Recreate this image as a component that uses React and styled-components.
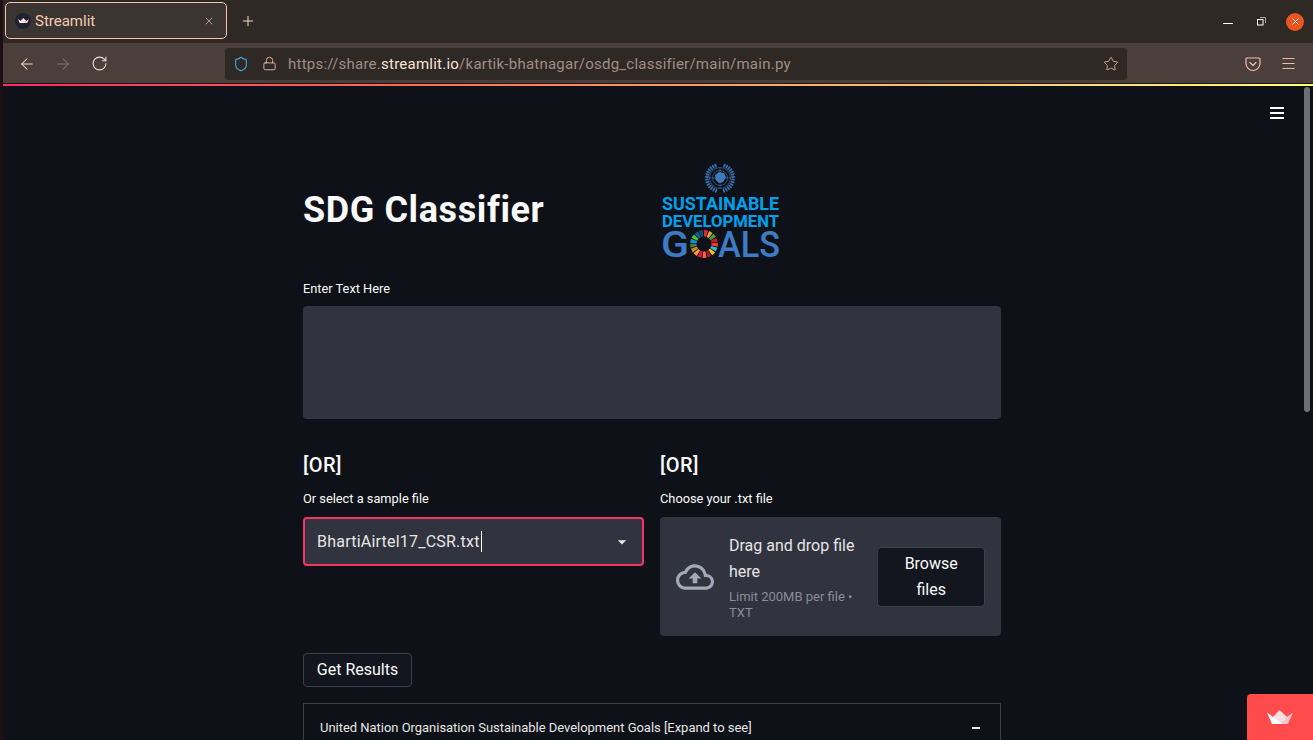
import React from "react";
import styled, { createGlobalStyle } from "styled-components";
import { ArrowLeft, ArrowRight, RotateCw, X, Plus, Lock, Star, Menu, Shield } from "lucide-react";
import { MdOutlineCloudUpload, MdArrowDropDown } from "react-icons/md";

const GlobalStyle = createGlobalStyle`
  html, body { margin: 0; padding: 0; background: #0e1117; overflow: hidden; }
  * { box-sizing: border-box; }
`;

const Screen = styled.div`
  display: flex;
  width: 1313px;
  height: 740px;
  overflow: hidden;
  position: relative;
  font-family: "Roboto", "Liberation Sans", sans-serif;
`;
const EdgeStrip = styled.div`
  width: 3px;
  background: #1d0f14;
`;
const Browser = styled.div`
  flex: 1;
  min-width: 0;
  display: flex;
  flex-direction: column;
`;

const TabBar = styled.div`
  height: 43px;
  background: #2f2926;
  display: flex;
  align-items: center;
  padding: 0 0 2px 2px;
`;
const Tab = styled.div`
  width: 222px;
  height: 37px;
  background: #3b3532;
  border: 1px solid #f3c3ad;
  border-radius: 5px;
  display: flex;
  align-items: center;
  padding: 0 11px 0 9px;
  color: #f7c9b3;
  font-size: 15px;
`;
const Favicon = styled.span`
  width: 16px;
  height: 16px;
  border-radius: 50%;
  background: #1f2230;
  display: flex;
  align-items: center;
  justify-content: center;
  margin-right: 4px;
`;
const TabTitle = styled.span`
  flex: 1;
`;
const NewTab = styled.div`
  margin-left: 13px;
  color: #f7dccf;
  display: flex;
`;
const WindowButtons = styled.div`
  margin-left: auto;
  padding-right: 9px;
  display: flex;
  align-items: center;
  margin-top: 2px;
`;
const MinimizeIcon = styled.span`
  width: 10px;
  height: 1px;
  background: #fff;
  margin: 4px 24px 0 0;
`;
const CloseCircle = styled.span`
  width: 18px;
  height: 18px;
  margin-left: 20px;
  border-radius: 50%;
  background: #e95420;
  color: #fff;
  display: flex;
  align-items: center;
  justify-content: center;
`;

const NavBar = styled.div`
  height: 41px;
  background: #4a3f3a;
  display: flex;
  align-items: center;
  padding-left: 15px;
`;
const NavIcon = styled.span`
  width: 18px;
  display: flex;
  justify-content: center;
  margin-right: ${(p) => p.$gap ?? 18}px;
  color: ${(p) => (p.$dim ? "#85746c" : "#f7dccf")};
`;
const UrlBar = styled.div`
  width: 902px;
  height: 32px;
  margin-left: 117px;
  background: #2f2926;
  border-radius: 4px;
  display: flex;
  align-items: center;
  padding: 0 8px;
  font-size: 15px;
  color: #a08d84;
`;
const UrlIcon = styled.span`
  display: flex;
  margin-right: ${(p) => p.$gap}px;
  color: ${(p) => p.$color || "#f0c0a8"};
`;
const UrlText = styled.span`
  flex: 1;
  letter-spacing: 0.24px;
`;
const Host = styled.span`
  color: #fbe3d6;
`;
const RightIcons = styled.div`
  display: flex;
  align-items: center;
  margin-left: 118px;
  gap: 19px;
  color: #f0c0a8;
`;

const GradientLine = styled.div`
  height: 2px;
  flex-shrink: 0;
  background: linear-gradient(90deg, #ff2b62, #ff6b55 30%, #ffc26a 70%, #fffd80);
  box-shadow: 0 -1px 0 #1a1513;
`;

const Page = styled.div`
  flex: 1;
  min-height: 0;
  background: #0e1117;
  position: relative;
  overflow: hidden;
  color: #fafafa;
  padding-right: 12px;
`;
const PageHeader = styled.div`
  height: 79px;
  display: flex;
  justify-content: flex-end;
  align-items: flex-start;
  padding: 21px 17px 0 0;
`;
const HamburgerLines = styled.span`
  width: 14px;
  height: 12px;
  border-top: 2px solid #fff;
  border-bottom: 2px solid #fff;
  position: relative;
  &::after {
    content: "";
    position: absolute;
    left: 0;
    right: 0;
    top: 3px;
    height: 2px;
    background: #fff;
  }
`;
const Main = styled.div`
  width: 698px;
  margin: 0 auto;
  display: flex;
  flex-direction: column;
`;
const Columns = styled.div`
  display: grid;
  grid-template-columns: 341px 341px;
  column-gap: 16px;
  margin-top: ${(p) => p.$mt || 0}px;
`;
const Title = styled.h1`
  margin: 0;
  padding-top: 22px;
  font-size: 36px;
  line-height: 46px;
  font-weight: 700;
  letter-spacing: 0.6px;
`;
const Logo = styled.svg`
  display: block;
  width: 120px;
  height: 96px;
  overflow: visible;
`;
const FieldLabel = styled.div`
  font-size: 12.8px;
  line-height: 16px;
  color: #fafafa;
  margin-top: ${(p) => p.$mt || 0}px;
  margin-bottom: ${(p) => p.$mb || 10}px;
`;
const TextBox = styled.div`
  height: 113px;
  background: #31333f;
  border-radius: 4px;
`;
const OrHeading = styled.div`
  font-size: 20px;
  line-height: 26px;
  font-weight: 500;
  letter-spacing: 0.4px;
  margin-bottom: 13px;
`;
const SelectBox = styled.div`
  height: 49px;
  background: #31333f;
  border: 2px solid #f63366;
  border-radius: 4px;
  display: flex;
  align-items: center;
  padding: 0 10px 0 12px;
  font-size: 16px;
`;
const SelectValue = styled.span`
  flex: 1;
  color: #e6e6e6;
  letter-spacing: 0.22px;
`;
const Caret = styled.span`
  display: inline-block;
  width: 1px;
  height: 21px;
  background: #fff;
  vertical-align: -5px;
  margin-left: 1px;
`;
const Uploader = styled.div`
  height: 119px;
  background: #31333f;
  border-radius: 4px;
  display: flex;
  align-items: center;
  padding: 0 16px;
`;
const UploadIcon = styled.span`
  display: flex;
  color: #a3a8b8;
  margin-right: 15px;
`;
const UploadText = styled.div`
  width: 135px;
  margin-right: 14px;
`;
const DropText = styled.div`
  font-size: 16px;
  line-height: 26px;
  color: #e6e6e6;
`;
const LimitText = styled.div`
  font-size: 13px;
  line-height: 16px;
  color: #8b8d98;
  margin-top: 4px;
`;
const Button = styled.button`
  font-family: inherit;
  font-size: 16px;
  line-height: 26px;
  color: #fafafa;
  background: #13161e;
  border: 1px solid #3e4049;
  border-radius: 4px;
  padding: 3px 12px;
  width: ${(p) => p.$width};
`;
const ResultsRow = styled.div`
  margin-top: 17px;
`;
const Expander = styled.div`
  margin-top: 16px;
  height: 60px;
  border: 1px solid #3e4049;
  display: flex;
  align-items: flex-start;
  justify-content: space-between;
  padding: 15px 20px 0 16px;
  font-size: 13px;
  line-height: 18px;
  letter-spacing: -0.03px;
  color: #e6e6e6;
`;
const Dash = styled.span`
  width: 8px;
  height: 2px;
  background: #e6e6e6;
  margin-top: 8px;
`;
const Thumb = styled.div`
  position: absolute;
  right: 3px;
  top: 1px;
  width: 6px;
  height: 325px;
  border-radius: 3px;
  background: #6d6f75;
`;
const Badge = styled.div`
  position: absolute;
  right: 0;
  bottom: 0;
  width: 66px;
  height: 46px;
  background: #ff4b4b;
  border-top-left-radius: 4px;
  display: flex;
  justify-content: center;
  padding-top: 16px;
`;

function Crown({ size = 26 }) {
  const h = (size * 14) / 26;
  return (
    <svg width={size} height={h} viewBox="0 0 26 14">
      <polygon points="26,2.5 21,14 10,14" fill="#ffc4cc" />
      <polygon points="12.5,0 6,7 13,14 20,7" fill="#ffdfe3" />
      <polygon points="0,2.5 16,14 5,14" fill="#fff" />
    </svg>
  );
}

function PocketIcon() {
  return (
    <svg width="16" height="16" viewBox="0 0 16 16" fill="none" stroke="currentColor" strokeWidth="1.2">
      <path d="M2 2h12a1 1 0 0 1 1 1v4.5a7 7 0 0 1-14 0V3a1 1 0 0 1 1-1z" />
      <path d="M5 6.5 8 9.5l3-3" strokeLinecap="round" strokeLinejoin="round" />
    </svg>
  );
}

const sdgColors = [
  "#e5243b", "#dda63a", "#4c9f38", "#c5192d", "#ff3a21", "#26bde2", "#fcc30b", "#a21942", "#fd6925",
  "#dd1367", "#fd9d24", "#bf8b2e", "#3f7e44", "#0a97d9", "#56c02b", "#00689d", "#19486a",
];

function segment(i, total, cx, cy, r1, r2) {
  const a = (i / total) * Math.PI * 2 - Math.PI / 2;
  const b = ((i + 0.8) / total) * Math.PI * 2 - Math.PI / 2;
  const pt = (r, t) => `${(cx + r * Math.cos(t)).toFixed(2)} ${(cy + r * Math.sin(t)).toFixed(2)}`;
  return `M${pt(r1, a)}L${pt(r2, a)}L${pt(r2, b)}L${pt(r1, b)}Z`;
}

function SdgLogo() {
  const wreath = [];
  for (let i = 0; i < 14; i++) {
    const t = (i / 13) * 2.5 + 0.3;
    const x = 13.2 * Math.sin(t);
    const y = 13 + 13.2 * Math.cos(t);
    const deg = (t * 180) / Math.PI;
    wreath.push(
      <ellipse key={i} cx={60 + x} cy={y} rx="1" ry="2.2" fill="#3a6ba5" transform={`rotate(${-deg} ${60 + x} ${y})`} />,
      <ellipse key={`l${i}`} cx={60 - x} cy={y} rx="1" ry="2.2" fill="#3a6ba5" transform={`rotate(${deg} ${60 - x} ${y})`} />
    );
  }
  return (
    <Logo viewBox="0 0 120 96">
      {wreath}
      <g fill="none" stroke="#4279ba" strokeWidth="0.6">
        <circle cx="60" cy="13" r="10.5" />
        <circle cx="60" cy="13" r="7.5" />
        <circle cx="60" cy="13" r="4.5" />
        <path d="M60 2.5V23.5M49.5 13H70.5" />
      </g>
      <path d="M55 10l4-3 5 1 2 4-3 5-4 1-3-3z" fill="#4279ba" />
      <g fontFamily="Roboto, sans-serif" fontWeight="700">
        <text x="2" y="45" fontSize="18.5" fill="#00a1ec" textLength="117" lengthAdjust="spacingAndGlyphs">
          SUSTAINABLE
        </text>
        <text x="2" y="62" fontSize="16" fill="#00a1ec" textLength="117" lengthAdjust="spacingAndGlyphs">
          DEVELOPMENT
        </text>
      </g>
      <g fontFamily="Roboto, sans-serif" fontWeight="500">
        <text x="1" y="92" fontSize="36" fill="#3d7cc4" textLength="28" lengthAdjust="spacingAndGlyphs">
          G
        </text>
        <text x="58" y="92" fontSize="36" fill="#3d7cc4" textLength="62" lengthAdjust="spacingAndGlyphs">
          ALS
        </text>
      </g>
      {sdgColors.map((c, i) => (
        <path key={c + i} d={segment(i, sdgColors.length, 44, 79, 7.5, 14)} fill={c} />
      ))}
    </Logo>
  );
}

export default function App() {
  return (
    <Screen>
      <GlobalStyle />
      <EdgeStrip />
      <Browser>
        <TabBar>
          <Tab>
            <Favicon>
              <Crown size={11} />
            </Favicon>
            <TabTitle>Streamlit</TabTitle>
            <X size={12} strokeWidth={1.3} />
          </Tab>
          <NewTab>
            <Plus size={16} strokeWidth={1.5} />
          </NewTab>
          <WindowButtons>
            <MinimizeIcon />
            <svg width="9" height="9" viewBox="0 0 9 9" fill="none">
              <rect x="0.5" y="2.5" width="5.5" height="5.5" stroke="#fff" />
              <path d="M3 0.5h5.5V6" stroke="#aaa" />
            </svg>
            <CloseCircle>
              <X size={11} strokeWidth={2} />
            </CloseCircle>
          </WindowButtons>
        </TabBar>
        <NavBar>
          <NavIcon>
            <ArrowLeft size={18} strokeWidth={1.4} />
          </NavIcon>
          <NavIcon $dim>
            <ArrowRight size={18} strokeWidth={1.4} />
          </NavIcon>
          <NavIcon $gap={0}>
            <RotateCw size={17} strokeWidth={1.5} />
          </NavIcon>
          <UrlBar>
            <UrlIcon $gap={13} $color="#45a8e6">
              <Shield size={16} strokeWidth={1.6} />
            </UrlIcon>
            <UrlIcon $gap={11}>
              <Lock size={15} strokeWidth={1.4} />
            </UrlIcon>
            <UrlText>
              https://share.<Host>streamlit.io</Host>/kartik-bhatnagar/osdg_classifier/main/main.py
            </UrlText>
            <Star size={16} strokeWidth={1.2} color="#f0c0a8" />
          </UrlBar>
          <RightIcons>
            <PocketIcon />
            <Menu size={17} strokeWidth={1.4} />
          </RightIcons>
        </NavBar>
        <GradientLine />
        <Page>
          <Thumb />
          <PageHeader>
            <HamburgerLines />
          </PageHeader>
          <Main>
            <Columns>
              <Title>SDG Classifier</Title>
              <SdgLogo />
            </Columns>
            <FieldLabel $mt={20} $mb={9}>
              Enter Text Here
            </FieldLabel>
            <TextBox />
            <Columns $mt={33}>
              <div>
                <OrHeading>[OR]</OrHeading>
                <FieldLabel>Or select a sample file</FieldLabel>
                <SelectBox>
                  <SelectValue>
                    BhartiAirtel17_CSR.txt
                    <Caret />
                  </SelectValue>
                  <MdArrowDropDown size={20} color="#e6e6e6" />
                </SelectBox>
              </div>
              <div>
                <OrHeading>[OR]</OrHeading>
                <FieldLabel>Choose your .txt file</FieldLabel>
                <Uploader>
                  <UploadIcon>
                    <MdOutlineCloudUpload size={38} />
                  </UploadIcon>
                  <UploadText>
                    <DropText>Drag and drop file here</DropText>
                    <LimitText>Limit 200MB per file • TXT</LimitText>
                  </UploadText>
                  <Button $width="108px">Browse files</Button>
                </Uploader>
              </div>
            </Columns>
            <ResultsRow>
              <Button $width="109px">Get Results</Button>
            </ResultsRow>
            <Expander>
              <span>United Nation Organisation Sustainable Development Goals [Expand to see]</span>
              <Dash />
            </Expander>
          </Main>
          <Badge>
            <Crown size={26} />
          </Badge>
        </Page>
      </Browser>
    </Screen>
  );
}
